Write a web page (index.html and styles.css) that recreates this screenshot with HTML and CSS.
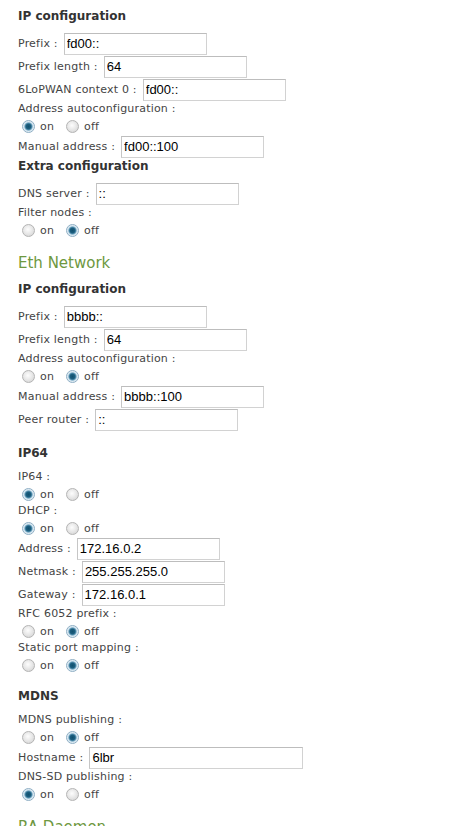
FILE: index.html
```html
<!DOCTYPE html>
<html lang="en">
<head>
    <meta charset="UTF-8">
    <title>6LBR configuration</title>
    <link rel="stylesheet" href="styles.css">
</head>
<body>

<div class="page">
    <h3 class="title">IP configuration</h3>
    <div class="row">Prefix :<input class="field" type="text" value="fd00::"></div>
    <div class="row">Prefix length :<input class="field" type="text" value="64"></div>
    <div class="row">6LoPWAN context 0 :<input class="field" type="text" value="fd00::"></div>
    <div class="line">Address autoconfiguration :</div>
    <div class="choice">
        <input type="radio" name="wsn_auto" checked><span>on</span>
        <input type="radio" name="wsn_auto"><span>off</span>
    </div>
    <div class="row">Manual address :<input class="field" type="text" value="fd00::100"></div>

    <h3 class="title">Extra configuration</h3>
    <div class="row">DNS server :<input class="field" type="text" value="::"></div>
    <div class="line">Filter nodes :</div>
    <div class="choice">
        <input type="radio" name="filter"><span>on</span>
        <input type="radio" name="filter" checked><span>off</span>
    </div>

    <h2 class="network">Eth Network</h2>
    <h3 class="title">IP configuration</h3>
    <div class="row">Prefix :<input class="field" type="text" value="bbbb::"></div>
    <div class="row">Prefix length :<input class="field" type="text" value="64"></div>
    <div class="line">Address autoconfiguration :</div>
    <div class="choice">
        <input type="radio" name="eth_auto"><span>on</span>
        <input type="radio" name="eth_auto" checked><span>off</span>
    </div>
    <div class="row">Manual address :<input class="field" type="text" value="bbbb::100"></div>
    <div class="row">Peer router :<input class="field" type="text" value="::"></div>

    <h3 class="title spaced">IP64</h3>
    <div class="line">IP64 :</div>
    <div class="choice">
        <input type="radio" name="ip64" checked><span>on</span>
        <input type="radio" name="ip64"><span>off</span>
    </div>
    <div class="line">DHCP :</div>
    <div class="choice">
        <input type="radio" name="dhcp" checked><span>on</span>
        <input type="radio" name="dhcp"><span>off</span>
    </div>
    <div class="row">Address :<input class="field" type="text" value="172.16.0.2"></div>
    <div class="row">Netmask :<input class="field" type="text" value="255.255.255.0"></div>
    <div class="row">Gateway :<input class="field" type="text" value="172.16.0.1"></div>
    <div class="line">RFC 6052 prefix :</div>
    <div class="choice">
        <input type="radio" name="rfc6052"><span>on</span>
        <input type="radio" name="rfc6052" checked><span>off</span>
    </div>
    <div class="line">Static port mapping :</div>
    <div class="choice">
        <input type="radio" name="portmap"><span>on</span>
        <input type="radio" name="portmap" checked><span>off</span>
    </div>

    <h3 class="title spaced">MDNS</h3>
    <div class="line">MDNS publishing :</div>
    <div class="choice">
        <input type="radio" name="mdns"><span>on</span>
        <input type="radio" name="mdns" checked><span>off</span>
    </div>
    <div class="row">Hostname :<input class="field wide" type="text" value="6lbr"></div>
    <div class="line">DNS-SD publishing :</div>
    <div class="choice">
        <input type="radio" name="dnssd" checked><span>on</span>
        <input type="radio" name="dnssd"><span>off</span>
    </div>

    <h2 class="network">RA Daemon</h2>
</div>

</body>
</html>
```

FILE: styles.css
```css
/* Base */
* {
    box-sizing: border-box;
    margin: 0;
    padding: 0;
}

body {
    font-family: "DejaVu Sans", Verdana, sans-serif;
    font-size: 11px;
    letter-spacing: 0.2px;
    color: #444;
    background-color: #fff;
}

.page {
    padding: 8px 0 0 18px;
}

/* Headings */
.title {
    font-size: 12px;
    font-weight: bold;
    line-height: 17px;
    letter-spacing: 0;
    color: #333;
    margin-bottom: 7px;
}

.title.spaced {
    margin-top: 14px;
}

.network {
    font-size: 15px;
    font-weight: normal;
    line-height: 20px;
    letter-spacing: 0;
    color: #6e983f;
    margin-top: 14px;
    margin-bottom: 8px;
}

/* Text fields */
.row {
    display: flex;
    align-items: center;
    height: 23px;
}

.field {
    width: 143px;
    height: 22px;
    margin-left: 6px;
    padding: 0 2px;
    border: 1px solid #d2d2d2;
    border-top-color: #bdbdbd;
    border-left-color: #c6c6c6;
    font-family: "Liberation Sans", Arial, sans-serif;
    font-size: 13px;
    letter-spacing: 0;
    color: #000;
    background-color: #fff;
}

.field.wide {
    width: 214px;
}

/* Labels and radio choices */
.line {
    height: 16px;
    line-height: 16px;
}

.choice {
    display: flex;
    align-items: center;
    height: 18px;
    padding-left: 4px;
    padding-top: 1px;
}

.choice span {
    margin-left: 5px;
    margin-right: 12px;
}

.choice input[type="radio"] {
    appearance: none;
    -webkit-appearance: none;
    width: 13px;
    height: 13px;
    border-radius: 50%;
    border: 1px solid #b4b4b4;
    background: radial-gradient(circle at 45% 40%, #fdfdfd 0, #e9e9e9 45%, #cfcfcf 100%);
}

.choice input[type="radio"]:checked {
    border-color: #8eaec4;
    background: radial-gradient(circle, #10506e 0, #1d5f80 2.5px, #5d97b5 3.5px, #cfe2ee 4.5px, #f2f7fa 6px);
}
```
